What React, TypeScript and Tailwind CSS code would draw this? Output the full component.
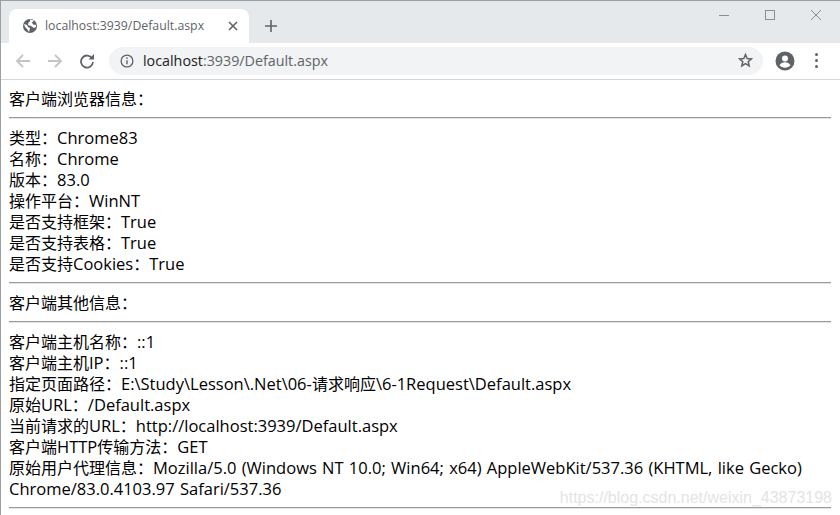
import { Fragment } from "react";

const font = { fontFamily: '"Open Sans", "Noto Sans CJK SC", sans-serif' };

const sections = [
  ["客户端浏览器信息："],
  [
    "类型：Chrome83",
    "名称：Chrome",
    "版本：83.0",
    "操作平台：WinNT",
    "是否支持框架：True",
    "是否支持表格：True",
    "是否支持Cookies：True",
  ],
  ["客户端其他信息："],
  [
    "客户端主机名称：::1",
    "客户端主机IP：::1",
    "指定页面路径：E:\\Study\\Lesson\\.Net\\06-请求响应\\6-1Request\\Default.aspx",
    "原始URL：/Default.aspx",
    "当前请求的URL：http://localhost:3939/Default.aspx",
    "客户端HTTP传输方法：GET",
    "原始用户代理信息：Mozilla/5.0 (Windows NT 10.0; Win64; x64) AppleWebKit/537.36 (KHTML, like Gecko)",
    "Chrome/83.0.4103.97 Safari/537.36",
  ],
];

function TabStrip() {
  return (
    <div className="flex h-[42px] shrink-0 items-end bg-[#e6e9ec] pl-[8px]">
      <div className="flex h-[34px] w-[240px] items-center rounded-t-[8px] bg-white pl-[13px] pr-[11px]">
        <svg width="16" height="16" viewBox="0 0 16 16" className="shrink-0">
          <circle cx="8" cy="8" r="7" fill="#5f6368" />
          <path d="M2 6l3 1 1 2 2 1-1 4-2-3-2-2zM8 1.500l4 1-2 2 1 2 3 .5v2l-2 1-3-2-3-1 .5-2.500 1.500-1z" fill="#fff" />
        </svg>
        <span className="ml-[7px] flex-1 text-[12.300px] text-[#5f6368]">localhost:3939/Default.aspx</span>
        <svg width="10" height="10" viewBox="0 0 10 10">
          <path d="M1 1l8 8M9 1l-8 8" stroke="#5f6368" strokeWidth="1.600" />
        </svg>
      </div>
      <svg width="14" height="14" viewBox="0 0 14 14" className="mb-[10px] ml-[15px]">
        <path d="M7 1v12M1 7h12" stroke="#5f6368" strokeWidth="1.600" />
      </svg>
      <div className="ml-auto mt-[9px] flex items-center gap-[36px] self-start pr-[19px]">
        <svg width="10" height="10" viewBox="0 0 10 10">
          <path d="M0 5.500h10" stroke="#8a8d91" />
        </svg>
        <svg width="10" height="10" viewBox="0 0 10 10">
          <rect x=".5" y=".5" width="9" height="9" fill="none" stroke="#8a8d91" />
        </svg>
        <svg width="10" height="10" viewBox="0 0 10 10">
          <path d="M0 0l10 10M10 0L0 10" stroke="#8a8d91" />
        </svg>
      </div>
    </div>
  );
}

function Toolbar() {
  return (
    <div className="flex h-[37px] shrink-0 items-center border-b border-[#d4d6d9] bg-white pb-[1px] pl-[14px]">
      <svg width="16" height="16" viewBox="0 0 16 16" className="shrink-0">
        <path d="M15 8H2M8 2 2 8l6 6" fill="none" stroke="#c2c4c6" strokeWidth="1.800" />
      </svg>
      <svg width="16" height="16" viewBox="0 0 16 16" className="ml-[16px] shrink-0">
        <path d="M1 8h13M8 2l6 6-6 6" fill="none" stroke="#c2c4c6" strokeWidth="1.800" />
      </svg>
      <svg width="16" height="16" viewBox="0 0 16 16" className="ml-[16px] shrink-0">
        <path d="M13.200 5.500A6 6 0 1 0 14 9" fill="none" stroke="#5f6368" strokeWidth="1.800" />
        <path d="M9.500 6.500H15V1z" fill="#5f6368" />
      </svg>
      <div className="ml-[14px] flex h-[28px] w-[654px] items-center rounded-full bg-[#f1f3f4] pl-[11px] pr-[10px]">
        <svg width="14" height="14" viewBox="0 0 14 14" className="shrink-0">
          <circle cx="7" cy="7" r="5.900" fill="none" stroke="#5f6368" strokeWidth="1.300" />
          <path d="M7 6.200v4M7 3.600v1.400" stroke="#5f6368" strokeWidth="1.400" />
        </svg>
        <span className="ml-[9px] flex-1 text-[14.300px] text-[#5f6368]">
          <span className="text-[#202124]">localhost</span>:3939/Default.aspx
        </span>
        <svg width="15" height="15" viewBox="0 0 15 15" className="shrink-0">
          <path d="M7.500 1.500l1.700 4 4.300.4-3.300 2.800 1 4.200-3.700-2.200-3.700 2.200 1-4.200L1.500 5.900l4.300-.4z" fill="none" stroke="#5f6368" strokeWidth="1.500" />
        </svg>
      </div>
      <svg width="20" height="20" viewBox="0 0 20 20" className="ml-[12px] shrink-0">
        <circle cx="10" cy="10" r="9.500" fill="#5f6368" />
        <circle cx="10" cy="7.500" r="3" fill="#fff" />
        <path d="M4.500 14.200c1-2 3.300-3 5.500-3s4.500 1 5.500 3c-1.200 1.500-3.300 2.500-5.500 2.500s-4.300-1-5.500-2.500z" fill="#fff" />
      </svg>
      <div className="ml-[20px] flex shrink-0 flex-col gap-[3px]">
        <div className="size-[3px] rounded-full bg-[#5f6368]" />
        <div className="size-[3px] rounded-full bg-[#5f6368]" />
        <div className="size-[3px] rounded-full bg-[#5f6368]" />
      </div>
    </div>
  );
}

function Rule() {
  return <hr className="mb-[9px] mt-[7px] h-[2px] border-0 border-t border-[#9a9a9a] bg-[#e4e4e4]" />;
}

// latin runs are wider in the reference than the CJK font's em square suggests
function Line({ text }: { text: string }) {
  const parts = text.split(/([\x00-\x7f]+)/);
  return (
    <div className="h-[21px] whitespace-nowrap [word-spacing:1px]">
      {parts.map((part, i) =>
        i % 2 === 1 ? (
          <span key={i} className="text-[16.500px] leading-[1px]">
            {part}
          </span>
        ) : (
          part
        ),
      )}
    </div>
  );
}

export default function App() {
  return (
    <div className="flex h-[515px] w-[840px] flex-col overflow-hidden border-l border-t border-[#9ba0a5] bg-white" style={font}>
      <TabStrip />
      <Toolbar />
      <div className="relative flex-1 overflow-hidden pl-[8px] pr-[9px] pt-[9px] text-[16px] leading-[21px] text-black">
        {sections.map((lines, i) => (
          <Fragment key={i}>
            {lines.map((line) => (
              <Line key={line} text={line} />
            ))}
            <Rule />
          </Fragment>
        ))}
        <span className="absolute right-[8px] top-[407px] font-['Liberation_Sans',sans-serif] text-[16px] text-[#e4e4e4]">
          https://blog.csdn.net/weixin_43873198
        </span>
      </div>
    </div>
  );
}
